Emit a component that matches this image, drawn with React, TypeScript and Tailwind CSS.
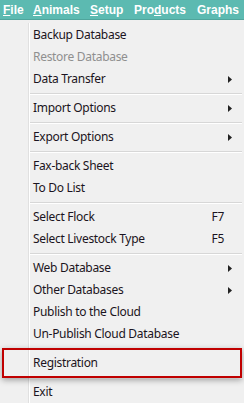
import React from "react";

type Item =
  | { type: "sep" }
  | { type: "item"; label: string; disabled?: boolean; arrow?: boolean; shortcut?: string; boxed?: boolean };

const items: Item[] = [
  { type: "item", label: "Backup Database" },
  { type: "item", label: "Restore Database", disabled: true },
  { type: "item", label: "Data Transfer", arrow: true },
  { type: "sep" },
  { type: "item", label: "Import Options", arrow: true },
  { type: "sep" },
  { type: "item", label: "Export Options", arrow: true },
  { type: "sep" },
  { type: "item", label: "Fax-back Sheet" },
  { type: "item", label: "To Do List" },
  { type: "sep" },
  { type: "item", label: "Select Flock", shortcut: "F7" },
  { type: "item", label: "Select Livestock Type", shortcut: "F5" },
  { type: "sep" },
  { type: "item", label: "Web Database", arrow: true },
  { type: "item", label: "Other Databases", arrow: true },
  { type: "item", label: "Publish to the Cloud" },
  { type: "item", label: "Un-Publish Cloud Database" },
  { type: "sep" },
  { type: "item", label: "Registration", boxed: true },
  { type: "sep" },
  { type: "item", label: "Exit" },
];

function Arrow() {
  return (
    <svg width="4" height="7" viewBox="0 0 4 7" className="block">
      <path d="M0 0 L4 3.5 L0 7 Z" fill="#222" />
    </svg>
  );
}

export default function App() {
  return (
    <div
      className="w-[244px] h-[403px] bg-[#f0f0f0] overflow-hidden relative"
      style={{ fontFamily: '"Noto Sans", "Open Sans", sans-serif' }}
    >
      <div
        className="h-[20px] bg-[#5cbab1] flex items-center text-white font-bold text-[12px] border-b border-[#4fa59c] whitespace-nowrap"
        style={{ fontFamily: '"Liberation Sans", Arial, sans-serif' }}
      >
        <span className="ml-[3px] w-[30px]"><u>F</u>ile</span>
        <span className="w-[57px]"><u>A</u>nimals</span>
        <span className="w-[44px]"><u>S</u>etup</span>
        <span className="w-[63px]">Pro<u>d</u>ucts</span>
        <span>Graphs</span>
      </div>
      <div className="relative pt-[4px]">
        <div className="absolute left-[28px] top-[3px] bottom-0 w-[1px] bg-[#e0e0e0]" />
        <div className="absolute left-[29px] top-[3px] bottom-0 w-[1px] bg-white" />
        {items.map((it, i) =>
          it.type === "sep" ? (
            <div key={i} className="h-[7px] flex items-center pl-[29px] pr-[2px]">
              <div className="h-[1px] w-full bg-[#d7d7d7] border-b border-white box-content" />
            </div>
          ) : (
            <div key={i} className="relative h-[22px] flex items-center pl-[33px] pr-[12px] text-[12px] tracking-[-0.3px]">
              <span className={it.disabled ? "text-[#8f8f8f]" : "text-[#1b1421]"}>{it.label}</span>
              <div className="flex-1" />
              {it.shortcut && <span className="text-[#1b1421] mr-[8px]">{it.shortcut}</span>}
              {it.arrow && <span><Arrow /></span>}
              {it.boxed && (
                <div className="absolute left-[2px] right-[2px] top-[-4px] bottom-[-4px] border-2 border-[#c00000] shadow-[0_2px_6px_rgba(0,0,0,0.35)]" />
              )}
            </div>
          )
        )}
      </div>
    </div>
  );
}
